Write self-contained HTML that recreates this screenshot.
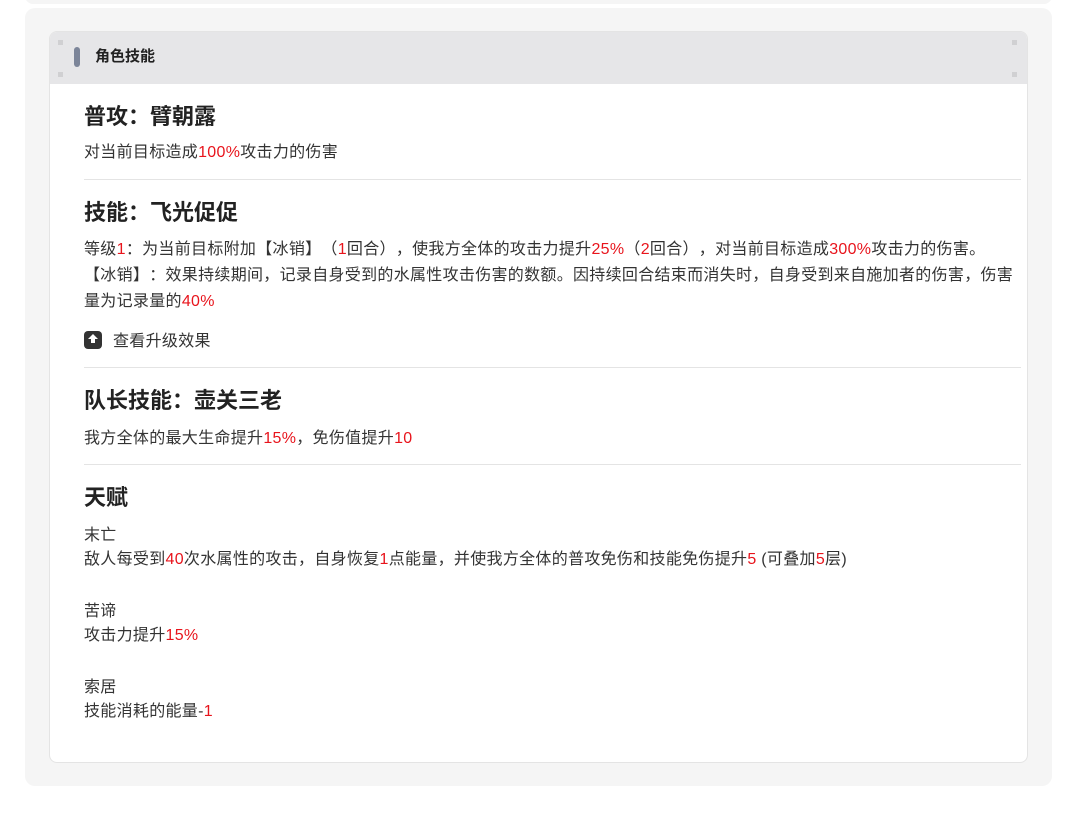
<!DOCTYPE html>
<html><head><meta charset="utf-8"><style>
*{margin:0;padding:0;box-sizing:border-box}
body{width:1080px;height:814px;background:#fff;font-family:"Liberation Sans","Noto Sans CJK SC",sans-serif;color:#333;position:relative;overflow:hidden;text-spacing-trim:space-all}
.top{position:absolute;left:25px;top:-10px;width:1027px;height:14px;background:#f5f5f5;border-radius:0 0 8px 8px}
.outer{position:absolute;left:25px;top:8px;width:1027px;height:778px;background:#f5f5f5;border-radius:10px}
.card{position:absolute;left:49px;top:31px;width:979px;height:732px;background:#fff;border:1px solid #e4e4e4;border-radius:8px;overflow:hidden}
.hd{height:52px;background:#e6e6e8;position:relative}
.hd .bar{position:absolute;left:24px;top:15px;width:6px;height:20px;background:#7c8599;border-radius:3px}
.hd .t{position:absolute;left:45px;top:14px;font-size:15px;font-weight:bold;color:#222;line-height:22px}
.dot{position:absolute;width:5px;height:5px;background:#d0d0d2}
.body{padding:0 6px 0 34px}
h2{font-size:22px;font-weight:bold;color:#222;line-height:30px}
p{font-size:16px;line-height:26px;letter-spacing:0.3px}
.r{color:#e8141c}
hr{border:0;border-top:1px solid #e4e4e4}
.up{display:inline-block;width:18px;height:18px;background:#333;border-radius:4px;vertical-align:-3px;margin-right:11px;position:relative}
.up:after{content:"";position:absolute;left:4px;top:3px;border:5px solid transparent;border-bottom:5px solid #fff;border-top:0}
.up:before{content:"";position:absolute;left:7px;top:8px;width:4px;height:4px;background:#fff}
</style></head><body>
<div class="top"></div>
<div class="outer"></div>
<div class="card">
<div class="hd"><div class="bar"></div><div class="t">角色技能</div>
<div class="dot" style="left:8px;top:8px"></div><div class="dot" style="left:8px;top:40px"></div>
<div class="dot" style="left:962px;top:8px"></div><div class="dot" style="left:962px;top:40px"></div></div>
<div class="body">
<h2 style="margin-top:18px">普攻：臂朝露</h2>
<p style="margin-top:8px">对当前目标造成<span class="r">100%</span>攻击力的伤害</p>
<hr style="margin-top:13px">
<h2 style="margin-top:18px">技能：飞光促促</h2>
<p style="margin-top:9px">等级<span class="r">1</span>：为当前目标附加【冰销】（<span class="r">1</span>回合），使我方全体的攻击力提升<span class="r">25%</span>（<span class="r">2</span>回合），对当前目标造成<span class="r">300%</span>攻击力的伤害。<br>【冰销】：效果持续期间，记录自身受到的水属性攻击伤害的数额。因持续回合结束而消失时，自身受到来自施加者的伤害，伤害量为记录量的<span class="r">40%</span></p>
<p style="margin-top:14px"><span class="up"></span>查看升级效果</p>
<hr style="margin-top:12px">
<h2 style="margin-top:18px">队长技能：壶关三老</h2>
<p style="margin-top:10px">我方全体的最大生命提升<span class="r">15%</span>，免伤值提升<span class="r">10</span></p>
<hr style="margin-top:12px">
<h2 style="margin-top:18px">天赋</h2>
<p style="margin-top:11px;line-height:24px">末亡<br>敌人每受到<span class="r">40</span>次水属性的攻击，自身恢复<span class="r">1</span>点能量，并使我方全体的普攻免伤和技能免伤提升<span class="r">5</span> (可叠加<span class="r">5</span>层)</p>
<p style="margin-top:28px;line-height:24px">苦谛<br>攻击力提升<span class="r">15%</span></p>
<p style="margin-top:28px;line-height:24px">索居<br>技能消耗的能量-<span class="r">1</span></p>
</div></div>
</body></html>
